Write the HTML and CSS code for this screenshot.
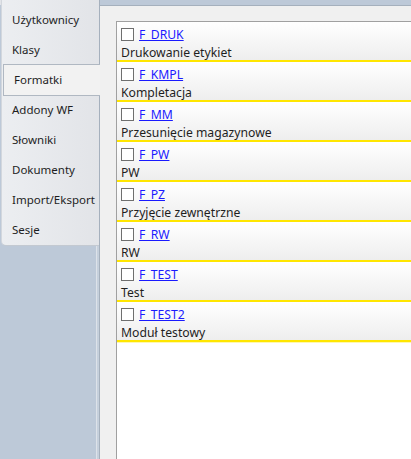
FILE: index.html
```html
<!DOCTYPE html>
<html lang="pl">
<head>
  <meta charset="UTF-8">
  <title>Formatki</title>
  <link rel="stylesheet" href="styles.css">
</head>
<body>
  <div class="window">
    <!-- Left side tabs -->
    <div class="tab-column">
      <ul class="tabs">
        <li class="tab">Użytkownicy</li>
        <li class="tab">Klasy</li>
        <li class="tab active">Formatki</li>
        <li class="tab">Addony WF</li>
        <li class="tab">Słowniki</li>
        <li class="tab">Dokumenty</li>
        <li class="tab">Import/Eksport</li>
        <li class="tab">Sesje</li>
      </ul>
    </div>

    <!-- Tab content -->
    <div class="panel">
      <div class="list-box">
        <div class="item">
          <div class="item-head"><span class="check"></span><a href="#">F_DRUK</a></div>
          <div class="item-desc">Drukowanie etykiet</div>
        </div>
        <div class="item">
          <div class="item-head"><span class="check"></span><a href="#">F_KMPL</a></div>
          <div class="item-desc">Kompletacja</div>
        </div>
        <div class="item">
          <div class="item-head"><span class="check"></span><a href="#">F_MM</a></div>
          <div class="item-desc">Przesunięcie magazynowe</div>
        </div>
        <div class="item">
          <div class="item-head"><span class="check"></span><a href="#">F_PW</a></div>
          <div class="item-desc">PW</div>
        </div>
        <div class="item">
          <div class="item-head"><span class="check"></span><a href="#">F_PZ</a></div>
          <div class="item-desc">Przyjęcie zewnętrzne</div>
        </div>
        <div class="item">
          <div class="item-head"><span class="check"></span><a href="#">F_RW</a></div>
          <div class="item-desc">RW</div>
        </div>
        <div class="item">
          <div class="item-head"><span class="check"></span><a href="#">F_TEST</a></div>
          <div class="item-desc">Test</div>
        </div>
        <div class="item">
          <div class="item-head"><span class="check"></span><a href="#">F_TEST2</a></div>
          <div class="item-desc">Moduł testowy</div>
        </div>
      </div>
    </div>
  </div>
</body>
</html>
```

FILE: styles.css
```css
html, body {
  margin: 0;
  height: 100%;
}
body {
  font-family: "Noto Sans", "Open Sans", sans-serif;
  font-size: 11.5px;
  color: #1e1e1e;
  background-color: #bdc9d8;
  overflow: hidden;
}
.window {
  display: flex;
  height: 100%;
}
.tab-column {
  width: 100px;
  flex-shrink: 0;
  background:
    linear-gradient(to bottom, #e2e4e8 0, #e2e4e8 5px, transparent 5px),
    linear-gradient(to right, #bdc9d8 96px, #dde2e9 96px, #dde2e9 97px, #c6d0dc 97px);
  border-right: 1px solid #a5b0bd;
  box-sizing: border-box;
  position: relative;
  z-index: 1;
}
.tabs {
  list-style: none;
  margin: 0 0 0 1px;
  padding: 5px 0 0;
  background: linear-gradient(to right, #eceef1, #e2e4e8);
  border-left: 1px solid #d3d7dd;
  border-bottom: 1px solid #c3c9d1;
  border-radius: 0 0 0 5px;
}
.tab {
  height: 30px;
  line-height: 30px;
  padding-left: 10px;
  white-space: nowrap;
}
.tab.active {
  background-color: #f2f2f2;
  border-top: 1px solid #b0b8c2;
  border-bottom: 1px solid #b0b8c2;
  border-left: 1px solid #b0b8c2;
  margin: -1px -1px -1px 1px;
  padding-left: 10px;
  position: relative;
}
.panel {
  flex: 1;
  margin-top: 5px;
  border-top: 1px solid #a5b0bd;
  background-color: #f0f0f0;
  padding: 15px 0 0 16px;
}
.list-box {
  height: 100%;
  background-color: #fff;
  border-left: 1px solid #a0a0a0;
  border-top: 1px solid #a0a0a0;
  font-size: 12.2px;
}
.item {
  height: 38px;
  padding-left: 4px;
  background: linear-gradient(to bottom, #ffffff, #eeeeee) padding-box;
  border-bottom: 2px solid #ffe600;
  box-shadow: 0 1px 0 #fff8b0;
}
.item-head {
  display: flex;
  align-items: center;
  height: 22px;
  padding-top: 2px;
  box-sizing: border-box;
}
.check {
  width: 11px;
  height: 11px;
  border: 1px solid #6f6f6f;
  background-color: #fff;
  margin-right: 5px;
}
.item-head a {
  color: #1a1aff;
  text-decoration: underline;
}
.item-desc {
  padding-top: 1px;
  line-height: 16px;
}
```
